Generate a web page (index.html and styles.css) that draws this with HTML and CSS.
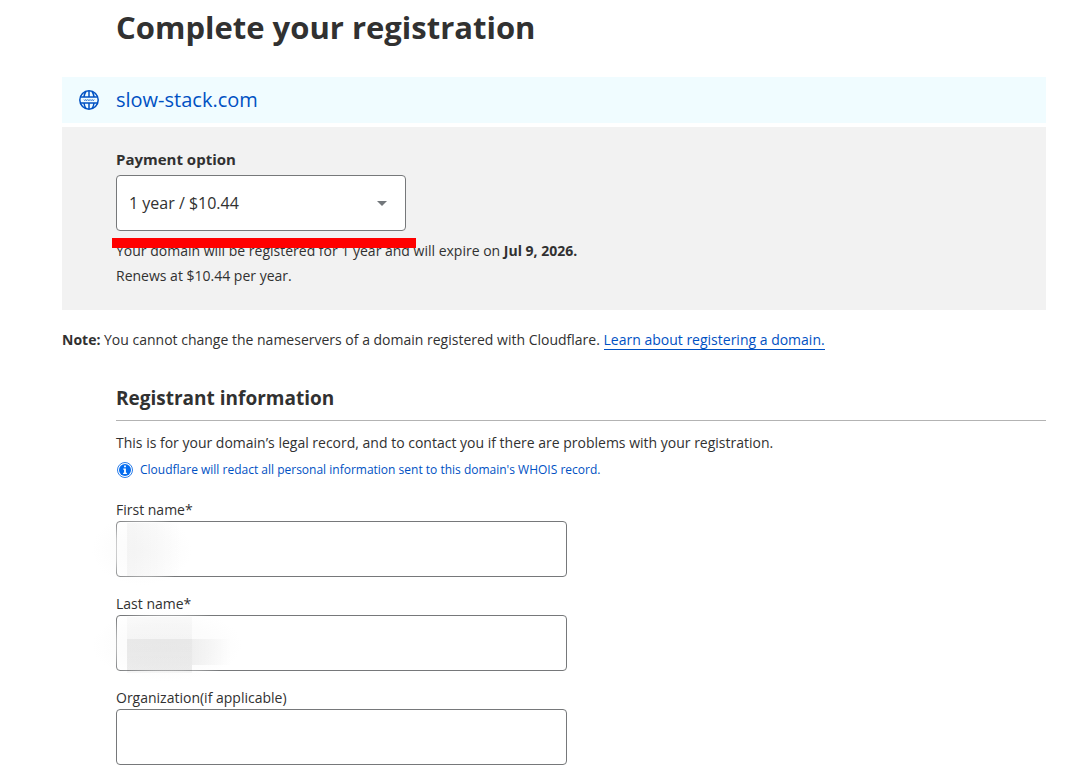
FILE: index.html
```html
<!DOCTYPE html>
<html lang="en">
<head>
  <meta charset="UTF-8" />
  <meta name="viewport" content="width=device-width, initial-scale=1.0" />
  <title>Complete your registration</title>
  <link rel="stylesheet" href="styles.css">
</head>
<body>
  <main class="page">
    <h1>Complete your registration</h1>

    <div class="domain">
      <svg class="globe" viewBox="0 0 20 20" fill="none" stroke="currentColor" stroke-width="1.5" aria-hidden="true">
        <circle cx="10" cy="10" r="9.2" />
        <path d="M1.5 7h17M1.5 13h17M10 1v6M10 13v6" />
        <path d="M7 1.5C5.800 3 5.200 5 5 7M13 1.500c1.200 1.500 1.800 3.500 2 5.500M5 13c.2 2 .8 4 2 5.500M15 13c-.2 2-.8 4-2 5.500" />
        <path d="M5 9.600l.8 1 .8-1 .8 1 .8-1M8.500 9.600l.8 1 .8-1 .8 1 .8-1M12 9.600l.8 1 .8-1 .8 1 .8-1" stroke-width=".8" />
      </svg>
      <span>slow-stack.com</span>
    </div>

    <section class="payment">
      <label for="payment">Payment option</label>
      <div class="select-box">
        <select id="payment">
          <option>1 year / $10.44</option>
        </select>
        <div class="marker"></div>
      </div>
      <p>Your domain will be registered for 1 year and will expire on <b>Jul 9, 2026.</b></p>
      <p>Renews at $10.44 per year.</p>
    </section>

    <p class="note"><b>Note:</b> You cannot change the nameservers of a domain registered with Cloudflare. <a href="#">Learn about registering a domain.</a></p>

    <form class="registrant">
      <h2>Registrant information</h2>
      <p>This is for your domain’s legal record, and to contact you if there are problems with your registration.</p>
      <p class="info">
        <svg viewBox="0 0 16 16" aria-hidden="true">
          <circle cx="8" cy="8" r="7.500" fill="#fff" stroke="#2b7de9" />
          <circle cx="8" cy="8" r="6" fill="#056df0" />
          <path d="M7.100 3.500h1.800v1.700H7.100zM6.300 6.500h2.600v4.300h1v1.200H6.100v-1.200h1V7.700h-.8z" fill="#fff" />
        </svg>
        <span>Cloudflare will redact all personal information sent to this domain's WHOIS record.</span>
      </p>

      <div class="field first">
        <label for="firstName">First name*</label>
        <input type="text" id="firstName" />
      </div>
      <div class="field last">
        <label for="lastName">Last name*</label>
        <input type="text" id="lastName" />
      </div>
      <div class="field">
        <label for="organization">Organization(if applicable)</label>
        <input type="text" id="organization" />
      </div>
    </form>
  </main>
</body>
</html>
```
FILE: styles.css
```css
* {
  box-sizing: border-box;
  margin: 0;
  padding: 0;
}

body {
  background: #fff;
  color: #313131;
  font-family: 'Open Sans', 'Noto Sans', sans-serif;
  font-size: 14px;
  line-height: 25px;
}

.page {
  padding: 3px 33px 16px 62px;
}

h1 {
  padding-left: 54px;
  margin-bottom: 26px;
  font-size: 31px;
  line-height: 48px;
}

.domain {
  display: flex;
  align-items: center;
  gap: 17px;
  padding: 8px 17px;
  margin-bottom: 4px;
  background: #f0fcff;
  color: #0051c3;
  font-size: 20px;
  line-height: 30px;
}

.globe {
  width: 20px;
  height: 20px;
}

.payment {
  padding: 21px 54px 22px;
  background: #f2f2f2;
}

.payment label {
  display: block;
  margin-bottom: 5px;
  font-size: 15px;
  font-weight: bold;
  line-height: 22px;
}

.select-box {
  position: relative;
  max-width: 290px;
  margin-bottom: 7px;
}

select {
  display: block;
  width: 100%;
  height: 56px;
  padding: 0 12px;
  border: 1px solid #76787a;
  border-radius: 4px;
  appearance: none;
  background: #fff;
  color: #313131;
  font-family: inherit;
  font-size: 16px;
}

.select-box::after {
  content: '';
  position: absolute;
  top: 26px;
  right: 19px;
  border: 5px solid transparent;
  border-top-color: #72777b;
  border-bottom: none;
}

/* red marker line under the price */
.marker {
  position: absolute;
  z-index: 1;
  top: 63px;
  left: -4px;
  right: -10px;
  height: 10px;
  background: #f00;
}

.note {
  margin-top: 17px;
}

.note a {
  color: #0051c3;
  text-decoration: none;
  border-bottom: 1px solid #0051c3;
}

.registrant {
  padding-left: 54px;
  margin-top: 31px;
}

h2 {
  padding-bottom: 7px;
  margin-bottom: 9px;
  border-bottom: 1px solid #b3b3b3;
  font-size: 19px;
  line-height: 30px;
}

.info {
  display: flex;
  align-items: center;
  gap: 7px;
  margin-top: 2px;
  color: #0051c3;
  font-size: 12px;
}

.info svg {
  width: 16px;
  height: 16px;
  margin-left: 1px;
}

.field {
  position: relative;
  max-width: 451px;
  margin-top: 16px;
}

.field label {
  display: block;
  line-height: 22px;
}

.info + .field {
  margin-top: 17px;
}

.field input {
  display: block;
  width: 100%;
  height: 56px;
  padding: 0 12px;
  border: 1px solid #76787a;
  border-radius: 4px;
  background: #fff;
  font-family: inherit;
  font-size: 16px;
}

/* smudges over the private values */
.first::after,
.last::after {
  content: '';
  position: absolute;
  pointer-events: none;
}

.first::after {
  top: 16px;
  left: -24px;
  width: 100px;
  height: 70px;
  background:
    linear-gradient(to right, rgba(0, 0, 0, 0.03), transparent) 35px 8px / 55px 54px no-repeat,
    radial-gradient(closest-side, rgba(250, 250, 250, 0.9), rgba(251, 251, 251, 0.6) 60%, transparent);
}

.last::after {
  top: 16px;
  left: -24px;
  width: 150px;
  height: 72px;
  background:
    linear-gradient(to right, rgba(0, 0, 0, 0.05), transparent) 100px 30px / 40px 26px no-repeat,
    linear-gradient(rgba(0, 0, 0, 0.05), rgba(0, 0, 0, 0.03)) 35px 30px / 65px 34px no-repeat,
    linear-gradient(rgba(0, 0, 0, 0.02), rgba(0, 0, 0, 0.04)) 35px 8px / 65px 54px no-repeat,
    radial-gradient(closest-side, rgba(250, 250, 250, 0.9), rgba(250, 250, 250, 0.6) 60%, transparent);
}
```
